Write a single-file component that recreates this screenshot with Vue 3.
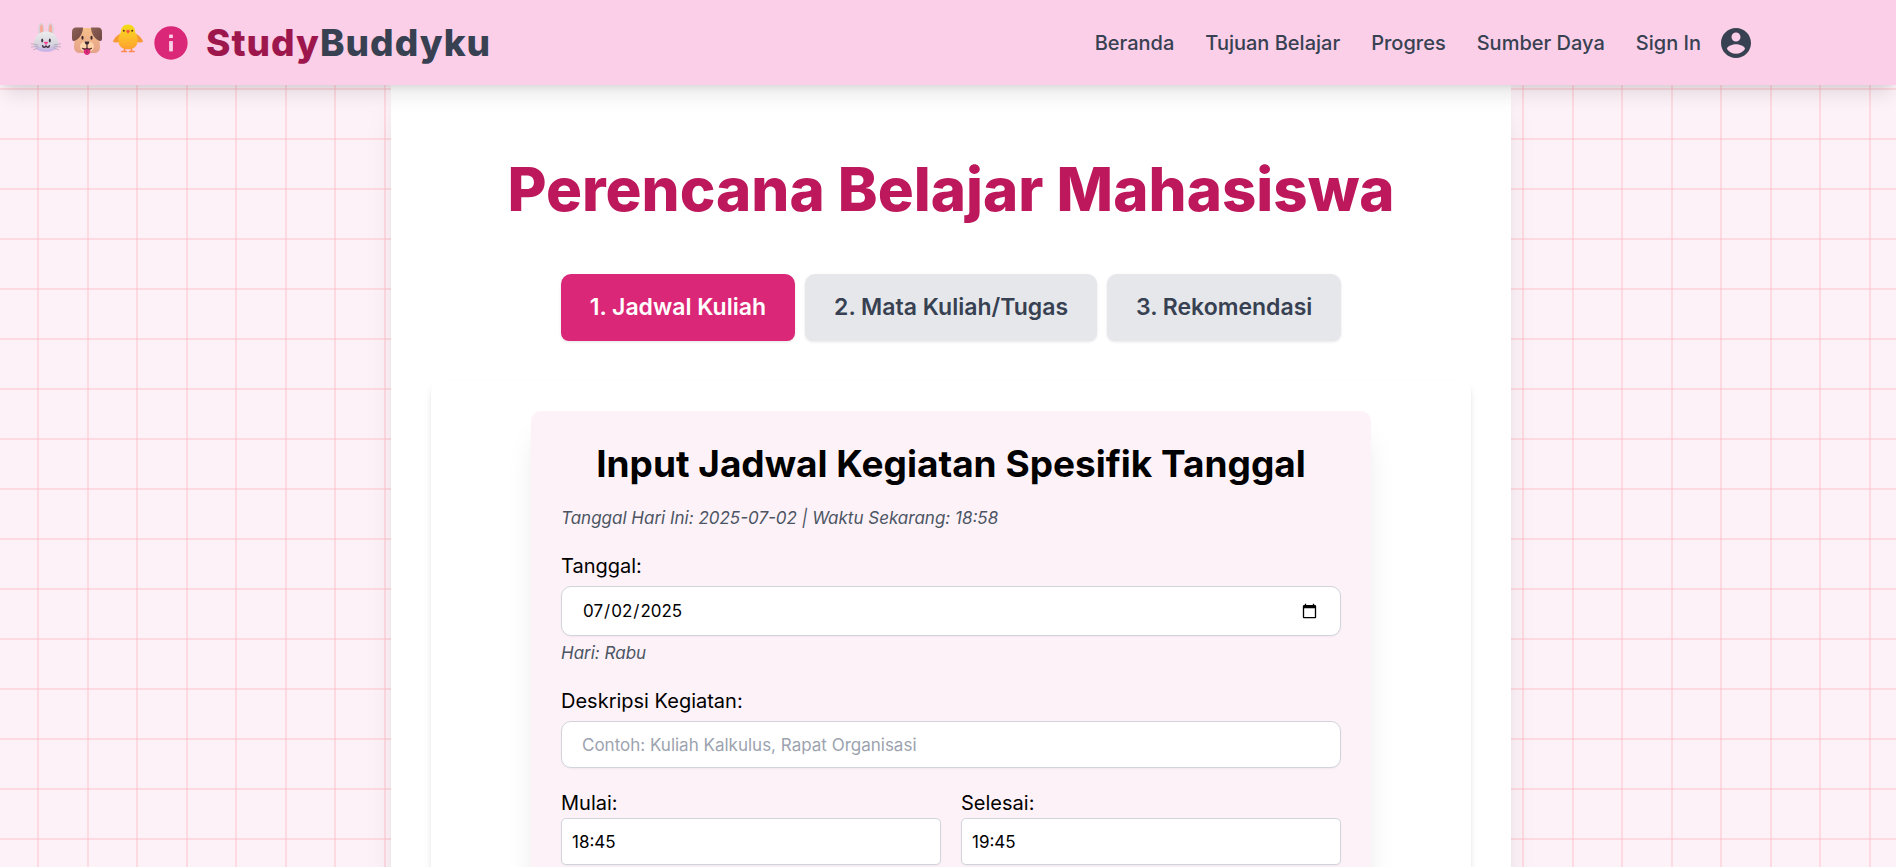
<script setup>
import { ref } from 'vue'

const navLinks = ['Beranda', 'Tujuan Belajar', 'Progres', 'Sumber Daya', 'Sign In']
const tabs = ['1. Jadwal Kuliah', '2. Mata Kuliah/Tugas', '3. Rekomendasi']

const activeTab = ref(0)
const date = ref('2025-07-02')
const description = ref('')
const startTime = ref('18:45')
const endTime = ref('19:45')
</script>

<template>
  <div class="app">
    <header class="topbar">
      <div class="brand">
        <div class="mascots" aria-hidden="true">
          <svg class="mascot" viewBox="0 0 32 32">
            <defs>
              <linearGradient id="rabbitFur" x1="0" y1="0" x2="0" y2="1">
                <stop offset="0" stop-color="#ececee" />
                <stop offset="0.6" stop-color="#d8d6de" />
                <stop offset="1" stop-color="#c5aee6" />
              </linearGradient>
            </defs>
            <ellipse cx="11.3" cy="8" rx="3" ry="7" fill="#d5d3d8" />
            <ellipse cx="20.7" cy="8" rx="3" ry="7" fill="#d5d3d8" />
            <ellipse cx="11.5" cy="8" rx="1.6" ry="5.4" fill="#f8aa9c" />
            <ellipse cx="20.5" cy="8" rx="1.6" ry="5.4" fill="#f8aa9c" />
            <path d="M16 9.5C9 9.5 3.8 15 3.8 21.5C3.8 27 8 29.8 16 29.8S28.2 27 28.2 21.5C28.2 15 23 9.5 16 9.5Z" fill="url(#rabbitFur)" />
            <ellipse cx="12.2" cy="18.5" rx="1" ry="1.9" fill="#3b3046" />
            <ellipse cx="19.8" cy="18.5" rx="1" ry="1.9" fill="#3b3046" />
            <path d="M14.2 20.3H17.8L16 22.4Z" fill="#f93b91" stroke="#f93b91" stroke-linejoin="round" />
            <path d="M12.6 23.6C12.8 25.7 15.6 25.8 16 23.7C16.4 25.8 19.2 25.7 19.4 23.6" fill="none" stroke="#3b2a3c" stroke-width="1.4" stroke-linecap="round" />
            <path d="M8 22.8L1 21.8M8 24.2L1 25M9 25.4L3 28M24 22.8L31 21.8M24 24.2L31 25M23 25.4L29 28" stroke="#a9a1b1" stroke-width="0.7" />
          </svg>
          <svg class="mascot mascot-low" viewBox="0 0 32 32">
            <defs>
              <linearGradient id="dogFace" x1="0" y1="0" x2="0" y2="1">
                <stop offset="0" stop-color="#f6c08a" />
                <stop offset="1" stop-color="#e5a28a" />
              </linearGradient>
              <linearGradient id="dogEar" x1="0" y1="0" x2="1" y2="1">
                <stop offset="0" stop-color="#8d6155" />
                <stop offset="1" stop-color="#6f4643" />
              </linearGradient>
            </defs>
            <path d="M8 3H24C27 8 29 15 29 22C29 26 26.5 28 23 28H9C5.500 28 3 26 3 22C3 15 5 8 8 3Z" fill="url(#dogFace)" />
            <path d="M5 2.500H12C12 8 8.500 14.500 3 16C1.500 16.300 1 15 1 13V7C1 4 2.500 2.500 5 2.500Z" fill="url(#dogEar)" />
            <path d="M27 2.500H20C20 8 23.500 14.500 29 16C30.500 16.300 31 15 31 13V7C31 4 29.500 2.500 27 2.500Z" fill="url(#dogEar)" />
            <ellipse cx="16" cy="21.500" rx="7" ry="5.500" fill="#ffd4ab" />
            <ellipse cx="11.500" cy="12.800" rx="1.100" ry="2" fill="#39262d" />
            <ellipse cx="20.500" cy="12.800" rx="1.100" ry="2" fill="#39262d" />
            <path d="M12.800 23.500H19.200V26.500C19.200 31 12.800 31 12.800 26.500Z" fill="#dc2b78" />
            <path d="M16 24V28" stroke="#a81a60" stroke-width="0.8" />
            <path d="M13.800 16.500H18.200C18.600 18.400 17.200 19.600 16 19.600S13.400 18.400 13.800 16.500Z" fill="#38242c" />
            <path d="M16 19V22.300M11.500 23.300C13.400 24.700 15.500 24.300 16 22.300C16.500 24.300 18.600 24.700 20.500 23.300" fill="none" stroke="#4a2b30" stroke-width="1.100" stroke-linecap="round" />
          </svg>
          <svg class="mascot" viewBox="0 0 32 32">
            <defs>
              <linearGradient id="chickBody" x1="0" y1="0" x2="0" y2="1">
                <stop offset="0" stop-color="#f0de16" />
                <stop offset="0.5" stop-color="#fdc02a" />
                <stop offset="1" stop-color="#ffa02e" />
              </linearGradient>
            </defs>
            <path d="M12.500 25V29M19.500 25V29M9.800 29.400H14.600M17.400 29.400H22.200" fill="none" stroke="#ff8a4e" stroke-width="1.500" stroke-linecap="round" />
            <path d="M8.500 11.500C5 13 2.500 16 0.800 19.800C3 21 6 20.800 8.500 19.600Z" fill="#f69a35" />
            <path d="M23.500 11.500C27 13 29.500 16 31.200 19.800C29 21 26 20.800 23.500 19.600Z" fill="#f69a35" />
            <path d="M16 2.500C11.600 2.500 9.200 5.500 9 9C8.800 12 6.300 13.500 6.300 18.500C6.300 24 10 27.300 16 27.300S25.700 24 25.700 18.500C25.700 13.500 23.200 12 23 9C22.800 5.500 20.400 2.500 16 2.500Z" fill="url(#chickBody)" />
            <circle cx="11.800" cy="8.700" r="1" fill="#5b3820" />
            <circle cx="20.200" cy="8.700" r="1" fill="#5b3820" />
            <path d="M13.800 9L16 7.600L18.200 9L16 11.700Z" fill="#f7583c" />
          </svg>
          <svg class="info" viewBox="0 0 24 24">
            <path fill="#db2777" d="M12 2C6.480 2 2 6.480 2 12s4.480 10 10 10 10-4.480 10-10S17.520 2 12 2zm1 15h-2v-6h2v6zm0-8h-2V7h2v2z" />
            <path fill="#fbcfe8" d="M11 11h2v6h-2zM11 7h2v2h-2z" />
          </svg>
        </div>
        <span class="wordmark"><span class="wordmark-first">Study</span>Buddyku</span>
      </div>
      <nav class="nav">
        <a v-for="link in navLinks" :key="link" href="#" class="nav-link">{{ link }}</a>
        <button type="button" class="account" aria-label="Akun">
          <svg viewBox="0 0 24 24">
            <path fill="currentColor" d="M12 2C6.480 2 2 6.480 2 12s4.480 10 10 10 10-4.480 10-10S17.520 2 12 2zm0 3c1.660 0 3 1.340 3 3s-1.340 3-3 3-3-1.340-3-3 1.340-3 3-3zm0 14.200c-2.500 0-4.710-1.280-6-3.220.030-1.990 4-3.080 6-3.080 1.990 0 5.970 1.090 6 3.080-1.290 1.940-3.500 3.220-6 3.220z" />
          </svg>
        </button>
      </nav>
    </header>

    <main class="scroller">
      <div class="sheet">
        <h1 class="title">Perencana Belajar Mahasiswa</h1>
        <div class="tabs" role="tablist">
          <button
            v-for="(tab, i) in tabs"
            :key="tab"
            type="button"
            role="tab"
            class="tab"
            :class="{ active: i === activeTab }"
            :aria-selected="i === activeTab"
            @click="activeTab = i"
          >{{ tab }}</button>
        </div>

        <section class="panel">
          <form class="card" @submit.prevent>
            <h2 class="card-title">Input Jadwal Kegiatan Spesifik Tanggal</h2>
            <p class="note">Tanggal Hari Ini: 2025-07-02 | Waktu Sekarang: 18:58</p>

            <div class="field">
              <label for="date">Tanggal:</label>
              <input id="date" v-model="date" type="date" class="control control-date" />
              <p class="note note-day">Hari: Rabu</p>
            </div>

            <div class="field">
              <label for="description">Deskripsi Kegiatan:</label>
              <input id="description" v-model="description" type="text" class="control" placeholder="Contoh: Kuliah Kalkulus, Rapat Organisasi" />
            </div>

            <div class="times">
              <div class="time">
                <label for="start">Mulai:</label>
                <input id="start" v-model="startTime" type="text" class="control control-time" />
              </div>
              <div class="time">
                <label for="end">Selesai:</label>
                <input id="end" v-model="endTime" type="text" class="control control-time" />
              </div>
            </div>
          </form>
        </section>
      </div>
    </main>
  </div>
</template>

<style scoped>
.app {
  display: flex;
  flex-direction: column;
  height: 100vh;
  font-family: Inter, "Liberation Sans", sans-serif;
  font-size: 20px;
  line-height: 30px;
  color: #000;
  background-color: #fdf2f8;
  background-image:
    linear-gradient(rgba(255, 182, 193, 0.4) 2px, transparent 2px),
    linear-gradient(90deg, rgba(255, 182, 193, 0.4) 2px, transparent 2px, transparent 50px, rgba(255, 182, 193, 0.4) 50px, rgba(255, 182, 193, 0.4) 52px, transparent 52px);
  background-size: 100% 50px, 99px 100%;
  background-position: 0 38px, 37px 0;
}

.topbar {
  position: relative;
  z-index: 1;
  flex: none;
  display: flex;
  align-items: center;
  justify-content: space-between;
  padding: 20px 142px 20px 30px;
  background: #fbcfe8;
  box-shadow: 0 13px 19px -4px rgba(0, 0, 0, 0.1), 0 5px 8px -5px rgba(0, 0, 0, 0.1);
}

.brand {
  display: flex;
  align-items: center;
  gap: 15px;
}

.mascots {
  display: flex;
  align-items: center;
  gap: 9px;
}

.mascot {
  width: 32px;
  height: 32px;
  margin-bottom: 10px;
}

.mascot-low {
  margin-bottom: 4px;
}

.info {
  width: 40px;
  height: 40px;
  margin-left: -2px;
}

.wordmark {
  font-size: 37px;
  line-height: 45px;
  font-weight: 800;
  letter-spacing: 1px;
  color: #374151;
}

.wordmark-first {
  color: #9d174d;
}

.nav {
  display: flex;
  align-items: center;
  gap: 31px;
}

.nav-link {
  font-weight: 500;
  color: #374151;
  text-decoration: none;
}

.account {
  width: 36px;
  height: 36px;
  margin-left: -14px;
  padding: 0;
  border: 0;
  background: none;
  color: #374151;
}

.account svg {
  display: block;
}

.scroller {
  flex: 1;
  min-height: 0;
  padding-left: 6px;
  overflow-y: auto;
  scrollbar-width: none;
}

.sheet {
  box-sizing: border-box;
  max-width: 1120px;
  margin: 0 auto;
  padding: 74px 40px 40px;
  background: #fff;
  box-shadow: 0 25px 31px -6px rgba(0, 0, 0, 0.1), 0 10px 12px -8px rgba(0, 0, 0, 0.1);
}

.title {
  margin: 0 0 55px;
  font-size: 60px;
  line-height: 60px;
  font-weight: 800;
  text-align: center;
  color: #be185d;
}

.tabs {
  display: flex;
  justify-content: center;
  gap: 10px;
  margin-bottom: 40px;
}

.tab {
  padding: 18px 29px;
  border: 0;
  border-radius: 10px 10px 8px 8px;
  font: 600 23px/31px Inter, "Liberation Sans", sans-serif;
  color: #374151;
  background: #e5e7eb;
  box-shadow: 0 1px 3px rgba(0, 0, 0, 0.1);
}

.tab.active {
  color: #fff;
  background: #db2777;
}

.panel {
  padding: 30px 100px;
  border-radius: 10px;
  background: #fff;
  box-shadow: 0 5px 8px -1px rgba(0, 0, 0, 0.1), 0 3px 5px -2px rgba(0, 0, 0, 0.1);
}

.card {
  padding: 30px;
  border-radius: 10px;
  background: #fdf2f8;
  box-shadow: 0 25px 31px -6px rgba(0, 0, 0, 0.1), 0 10px 12px -8px rgba(0, 0, 0, 0.1);
}

.card-title {
  margin: 0 0 20px;
  font-size: 37px;
  line-height: 45px;
  font-weight: 700;
  text-align: center;
}

.note {
  margin: 0 0 20px;
  font-size: 17px;
  line-height: 25px;
  font-style: italic;
  color: #4b5563;
}

.note-day {
  margin: 5px 0 0;
}

.field {
  display: flex;
  flex-direction: column;
  margin-bottom: 20px;
}

.field label {
  margin-bottom: 5px;
}

.control {
  box-sizing: border-box;
  width: 100%;
  height: 47px;
  padding: 10px 20px;
  border: 1px solid #d1d5db;
  border-radius: 10px;
  font: 400 17px/25px Inter, "Liberation Sans", sans-serif;
  color: #000;
  background: #fff;
  box-shadow: 0 1px 2px rgba(0, 0, 0, 0.05);
}

.control::placeholder {
  color: #9ca3af;
}

.control-date {
  height: 50px;
}

.times {
  display: grid;
  grid-template-columns: 1fr 1fr;
  gap: 20px;
}

.time {
  display: flex;
  flex-direction: column;
}

.control-time {
  padding: 10px;
  border-radius: 5px;
}
</style>

<style>
body {
  margin: 0;
}
</style>
